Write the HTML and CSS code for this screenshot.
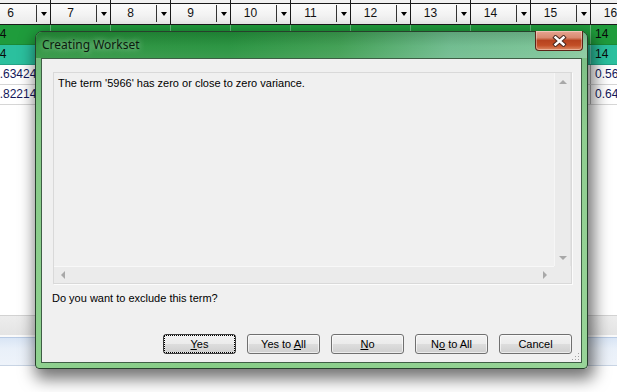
FILE: index.html
```html
<!DOCTYPE html>
<html lang="en">
<head>
  <meta charset="UTF-8">
  <title>Creating Workset</title>
  <link rel="stylesheet" href="styles.css">
</head>
<body>
  <!-- Spreadsheet behind the dialog -->
  <div class="sheet">
    <div class="head">
      <div class="hcell"><span class="hlabel">6</span><span class="hdrop"><i class="arrow"></i></span></div>
      <div class="hcell"><span class="hlabel">7</span><span class="hdrop"><i class="arrow"></i></span></div>
      <div class="hcell"><span class="hlabel">8</span><span class="hdrop"><i class="arrow"></i></span></div>
      <div class="hcell"><span class="hlabel">9</span><span class="hdrop"><i class="arrow"></i></span></div>
      <div class="hcell"><span class="hlabel">10</span><span class="hdrop"><i class="arrow"></i></span></div>
      <div class="hcell"><span class="hlabel">11</span><span class="hdrop"><i class="arrow"></i></span></div>
      <div class="hcell"><span class="hlabel">12</span><span class="hdrop"><i class="arrow"></i></span></div>
      <div class="hcell"><span class="hlabel">13</span><span class="hdrop"><i class="arrow"></i></span></div>
      <div class="hcell"><span class="hlabel">14</span><span class="hdrop"><i class="arrow"></i></span></div>
      <div class="hcell"><span class="hlabel">15</span><span class="hdrop"><i class="arrow"></i></span></div>
      <div class="hcell"><span class="hlabel">16</span><span class="hdrop"><i class="arrow"></i></span></div>
    </div>
    <div class="row green">
      <div class="cell">14</div><div class="cell"></div><div class="cell"></div><div class="cell"></div><div class="cell"></div><div class="cell"></div><div class="cell"></div><div class="cell"></div><div class="cell"></div><div class="cell"></div><div class="cell">14</div>
    </div>
    <div class="row teal">
      <div class="cell">14</div><div class="cell"></div><div class="cell"></div><div class="cell"></div><div class="cell"></div><div class="cell"></div><div class="cell"></div><div class="cell"></div><div class="cell"></div><div class="cell"></div><div class="cell">14</div>
    </div>
    <div class="row">
      <div class="cell">0.63424</div><div class="cell"></div><div class="cell"></div><div class="cell"></div><div class="cell"></div><div class="cell"></div><div class="cell"></div><div class="cell"></div><div class="cell"></div><div class="cell"></div><div class="cell">0.5631</div>
    </div>
    <div class="row">
      <div class="cell">0.82214</div><div class="cell"></div><div class="cell"></div><div class="cell"></div><div class="cell"></div><div class="cell"></div><div class="cell"></div><div class="cell"></div><div class="cell"></div><div class="cell"></div><div class="cell">0.6412</div>
    </div>
  </div>

  <!-- Status / tab bars at the bottom of the main window -->
  <div class="bands">
    <div class="band-gray"></div>
    <div class="band-blue"></div>
  </div>

  <!-- Modal dialog -->
  <div class="dialog">
    <div class="titlebar">
      <span class="title">Creating Workset</span>
      <button class="close" aria-label="Close">
        <svg width="15" height="12" viewBox="0 0 15 12">
          <path d="M3.5 2.5 L11.5 9.5 M11.5 2.5 L3.5 9.5" stroke="#4a2a22" stroke-width="4.4" stroke-linecap="square"/>
          <path d="M3.5 2.5 L11.5 9.5 M11.5 2.5 L3.5 9.5" stroke="#ffffff" stroke-width="2.4" stroke-linecap="square"/>
        </svg>
      </button>
    </div>
    <div class="client">
      <div class="msgbox">
        <div class="msgtext">The term '5966' has zero or close to zero variance.</div>
        <div class="vscroll">
          <i class="sa up"></i>
          <i class="sa down"></i>
        </div>
        <div class="hscroll">
          <i class="sa left"></i>
          <i class="sa right"></i>
        </div>
        <div class="corner"></div>
      </div>
      <p class="question">Do you want to exclude this term?</p>
      <div class="buttons">
        <button class="btn default"><span class="focus"><u>Y</u>es</span></button>
        <button class="btn">Yes to <u>A</u>ll</button>
        <button class="btn"><u>N</u>o</button>
        <button class="btn">N<u>o</u> to All</button>
        <button class="btn">Cancel</button>
      </div>
      <svg class="grip" width="8" height="8" viewBox="0 0 8 8">
        <rect x="6" y="0" width="1" height="1" fill="#a0a0a0"/>
        <rect x="3" y="3" width="1" height="1" fill="#a0a0a0"/>
        <rect x="6" y="3" width="1" height="1" fill="#a0a0a0"/>
        <rect x="0" y="6" width="1" height="1" fill="#a0a0a0"/>
        <rect x="3" y="6" width="1" height="1" fill="#a0a0a0"/>
        <rect x="6" y="6" width="1" height="1" fill="#a0a0a0"/>
      </svg>
    </div>
  </div>
</body>
</html>
```

FILE: styles.css
```css
/* General */
body {
  margin: 0;
  width: 617px;
  height: 392px;
  overflow: hidden;
  position: relative;
  background: #fff;
  font-family: "Liberation Sans", Arial, sans-serif;
  font-size: 11px;
  color: #000;
}

/* Spreadsheet */
.sheet {
  margin-left: -9px;
  width: 700px;
}
.head {
  display: flex;
  height: 25px;
  box-sizing: border-box;
  padding-top: 4px;
  border-bottom: 1px solid #1a1a1a;
  background:
    linear-gradient(#1a1a1a, #1a1a1a) 0 3px / 100% 1px no-repeat,
    linear-gradient(#f1f1f1, #f1f1f1) 0 0 / 100% 3px no-repeat,
    linear-gradient(#ffffff, #ebebeb);
}
.hcell {
  display: flex;
  flex: 0 0 60px;
  box-sizing: border-box;
  border-right: 1px solid #1a1a1a;
  margin-top: -4px;
  padding-top: 4px;
}
.hlabel {
  width: 45px;
  box-sizing: border-box;
  padding-right: 6px;
  text-align: center;
  font-size: 12px;
  line-height: 19px;
  color: #111;
}
.hdrop {
  flex: 1;
  display: flex;
  align-items: center;
  justify-content: center;
  border-left: 1px solid #333;
  margin: 1px 0 2px;
}
.arrow {
  width: 0;
  height: 0;
  border-left: 3.5px solid transparent;
  border-right: 3.5px solid transparent;
  border-top: 4px solid #000;
}
.row {
  display: flex;
  height: 20px;
  box-sizing: border-box;
  border-bottom: 1px solid #d6d6d6;
}
.row.green { background: #1f9c3c; border-bottom-color: #1b8a35; }
.row.teal { background: #2bc09e; border-bottom-color: #24a387; }
.cell {
  flex: 0 0 60px;
  box-sizing: border-box;
  border-right: 1px solid #b8b8b8;
  padding-left: 4px;
  font-size: 12px;
  line-height: 19px;
  color: #14185a;
  white-space: nowrap;
  overflow: hidden;
}
.cell:first-child { padding-left: 2px; }
.green .cell, .teal .cell { color: #0a0a0a; border-right-color: rgba(255, 255, 255, 0.35); }

/* Bottom bars of the main window */
.bands {
  position: absolute;
  left: 0;
  top: 315px;
  width: 617px;
}
.band-gray {
  height: 19px;
  border-top: 1px solid #d2d2d2;
  background: linear-gradient(#ededed, #e4e4e4);
  border-bottom: 2px solid #fafafa;
}
.band-blue {
  height: 27px;
  border-top: 1px solid #b9cbe4;
  border-bottom: 1px solid #c8d4e4;
  background: linear-gradient(#d9e5f5, #e9f0f9 40%, #eef3fa);
}

/* Dialog window */
.dialog {
  position: absolute;
  left: 35px;
  top: 31px;
  width: 553px;
  height: 338px;
  box-sizing: border-box;
  border: 1px solid #27402c;
  border-radius: 7px 7px 4px 4px;
  padding: 0 5px 5px;
  background:
    linear-gradient(to right, rgba(255,255,255,0.08), rgba(255,255,255,0) 30%, rgba(255,255,255,0.15)),
    linear-gradient(#5fae6c, #7cc57d 30%, #86cd86);
  box-shadow: 3px 7px 16px 3px rgba(0, 0, 0, 0.55);
  display: flex;
  flex-direction: column;
}
.titlebar {
  position: relative;
  height: 26px;
  margin: 0 -5px;
  padding-left: 6px;
  border-radius: 6px 6px 0 0;
  background:
    linear-gradient(rgba(0,0,0,0.12), rgba(255,255,255,0.05) 55%, rgba(255,255,255,0.1)),
    linear-gradient(to right, #27913a 0%, #22903a 35%, #3a9c4e 55%, #6ab98a 75%, #76c193 92%, #87c89c 100%);
}
.title {
  font-family: "Noto Sans", "Liberation Sans", sans-serif;
  font-size: 12px;
  line-height: 26px;
  color: #0c1a0e;
  text-shadow: 0 0 6px rgba(255,255,255,0.7);
}
.close {
  position: absolute;
  right: 4px;
  top: -1px;
  width: 48px;
  height: 20px;
  padding: 0;
  border: 1px solid #5b2418;
  border-top: none;
  border-radius: 0 0 4px 4px;
  background: linear-gradient(#e7a592 0%, #d98a70 35%, #b7431f 50%, #c24e26 75%, #dd8a64 100%);
  box-shadow: inset 0 0 0 1px rgba(255,255,255,0.35);
  display: flex;
  align-items: center;
  justify-content: center;
}

.client {
  position: relative;
  flex: 1;
  border: 1px solid #3e5e45;
  background: #f0f0f0;
  padding: 13px 9px 0 11px;
}
.msgbox {
  display: grid;
  grid-template-columns: 1fr 17px;
  grid-template-rows: 1fr 17px;
  width: 519px;
  height: 212px;
  box-sizing: border-box;
  border: 1px solid #d9d9d9;
  box-shadow: 1px 1px 0 #fcfcfc;
  background: #f0f0f0;
}
.msgtext {
  padding: 3px 0 0 4px;
  line-height: 14px;
  color: #000;
}
.vscroll {
  position: relative;
  background: #ebebeb;
  border-left: 1px solid #f6f6f6;
  border-right: 1px solid #e2e2e2;
}
.hscroll {
  position: relative;
  background: #ebebeb;
  border-top: 1px solid #f8f8f8;
}
.corner { background: #ebebeb; }
.sa {
  position: absolute;
  width: 0;
  height: 0;
}
.sa.up {
  left: 4px; top: 7px;
  border-left: 4px solid transparent;
  border-right: 4px solid transparent;
  border-bottom: 4px solid #a8a8a8;
}
.sa.down {
  left: 4px; bottom: 6px;
  border-left: 4px solid transparent;
  border-right: 4px solid transparent;
  border-top: 4px solid #a8a8a8;
}
.sa.left {
  left: 7px; top: 4px;
  border-top: 4px solid transparent;
  border-bottom: 4px solid transparent;
  border-right: 4px solid #a8a8a8;
}
.sa.right {
  right: 7px; top: 4px;
  border-top: 4px solid transparent;
  border-bottom: 4px solid transparent;
  border-left: 4px solid #a8a8a8;
}

.question {
  margin: 7px 0 0 -1px;
  line-height: 14px;
}
.buttons {
  display: flex;
  justify-content: flex-end;
  gap: 11px;
  margin-top: 29px;
}
.btn {
  width: 73px;
  height: 20px;
  padding: 0;
  border: 1px solid #707070;
  border-radius: 3px;
  background: linear-gradient(#f2f2f2 0%, #ebebeb 50%, #dddddd 51%, #cfcfcf 100%);
  box-shadow: inset 0 0 0 1px rgba(255,255,255,0.6);
  font-family: "Liberation Sans", Arial, sans-serif;
  font-size: 11px;
  color: #000;
}
.btn.default {
  border-color: #3c3c3c;
}
.btn .focus {
  display: block;
  margin: 1px;
  height: 16px;
  line-height: 16px;
  outline: 1px dotted #000;
  outline-offset: 0;
}
.grip {
  position: absolute;
  right: 1px;
  bottom: 1px;
}
```
